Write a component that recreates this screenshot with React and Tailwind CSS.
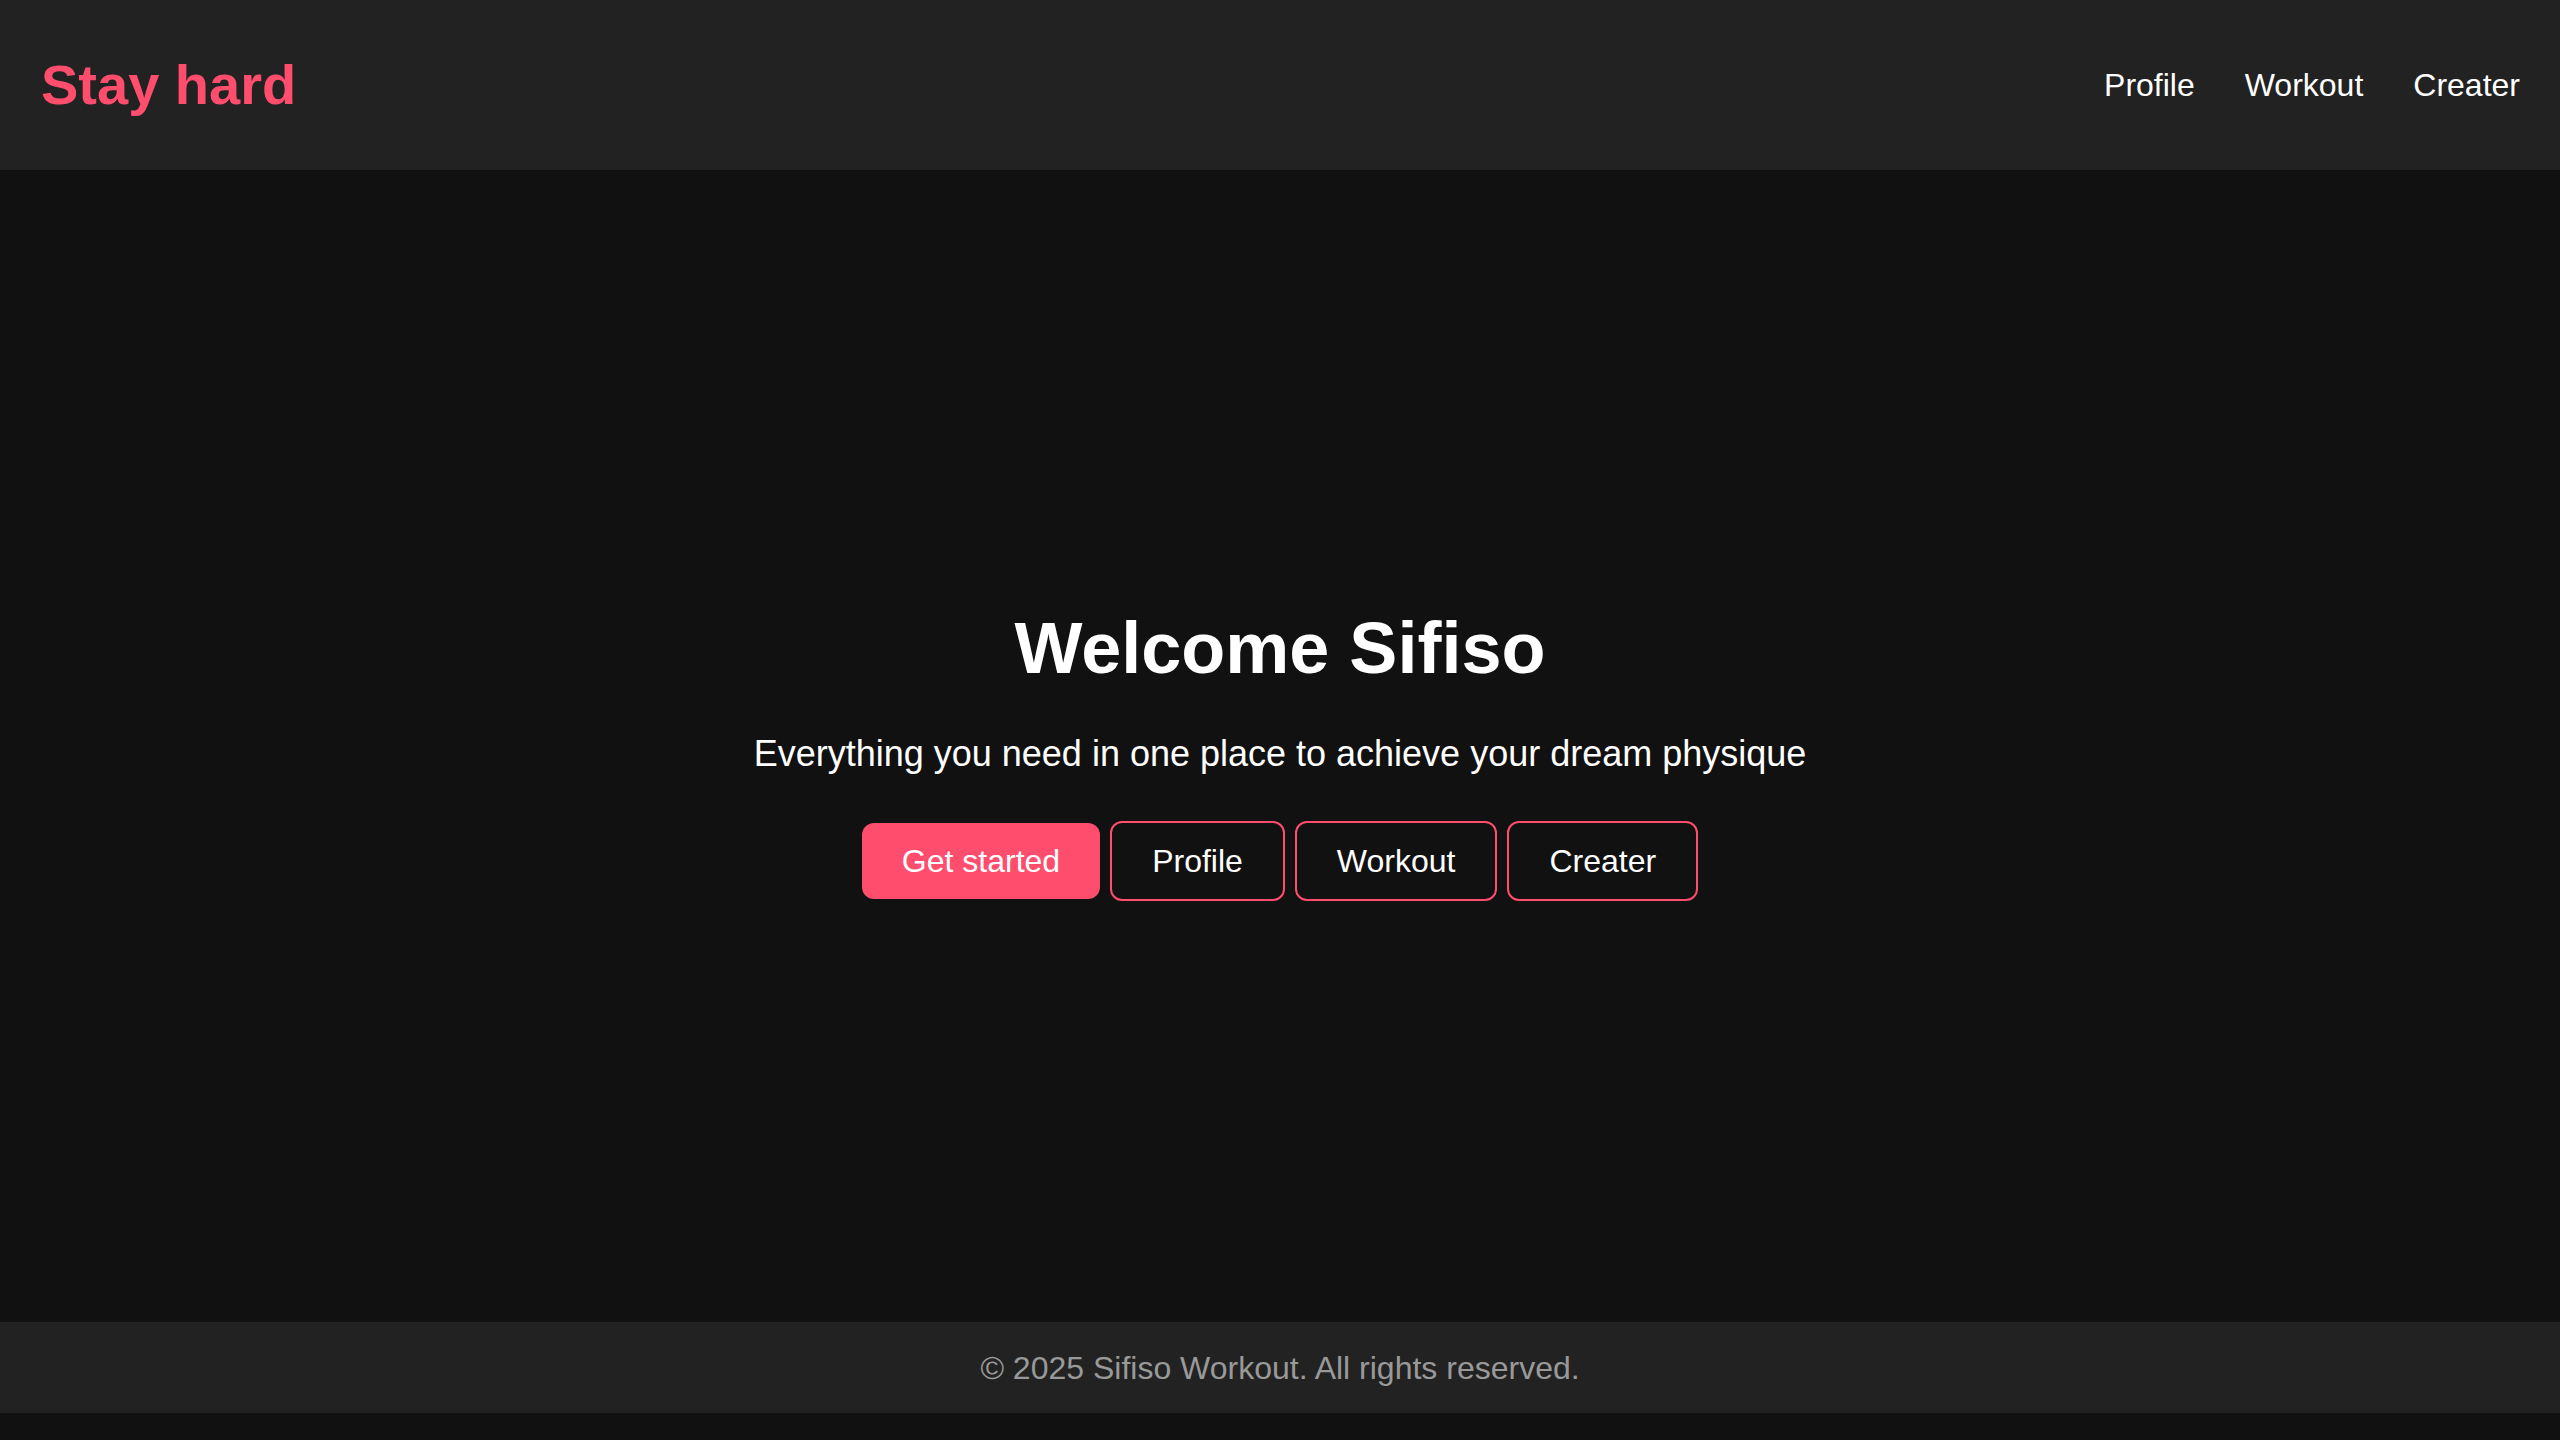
import React from 'react';

const links = ["Profile", "Workout", "Creater"];

const Header = () => (
    <header className="h-[170px] bg-[#222222] flex items-center justify-between pl-[41px] pr-[40px]">
        <h1 className="text-[56px] font-bold text-[#ff4d6d] leading-none">Stay hard</h1>
        <nav className="flex items-center gap-[50px]">
            {links.map(link => (
                <a key={link} href="#" className="text-[32px] text-white leading-none">{link}</a>
            ))}
        </nav>
    </header>
);

const Hero = () => (
    <main className="h-[1152px] flex flex-col items-center justify-center pt-[14px]">
        <h2 className="text-[72px] font-bold text-white leading-[1.2]">Welcome Sifiso</h2>
        <p className="mt-[36px] text-[36px] text-white leading-[1.5]">
            Everything you need in one place to achieve your dream physique
        </p>
        <div className="mt-[40px] flex items-center gap-[10px]">
            <button className="h-[76px] px-[40px] rounded-[12px] bg-[#ff4d6d] text-white text-[32px]">Get started</button>
            {links.map(link => (
                <button key={link} className="h-[80px] px-[40px] rounded-[12px] border-2 border-[#ff4d6d] text-white text-[32px]">
                    {link}
                </button>
            ))}
        </div>
    </main>
);

const Footer = () => (
    <footer className="h-[91px] bg-[#222222] flex items-center justify-center">
        <p className="text-[32px] text-[#999999]">© 2025 Sifiso Workout. All rights reserved.</p>
    </footer>
);

export default function App() {
    return (
        <div className="min-h-[1440px] bg-[#111111] font-['Liberation_Sans',Arial,sans-serif]">
            <Header />
            <Hero />
            <Footer />
        </div>
    );
}
